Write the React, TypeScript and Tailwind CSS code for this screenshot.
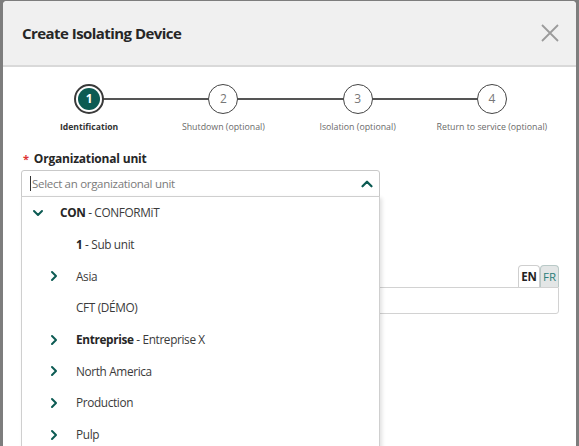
import { ChevronDown, ChevronRight, ChevronUp } from 'lucide-react';

type Unit = {
  level: number;
  icon?: 'down' | 'right';
  code?: string;
  name: string;
};

const units: Unit[] = [
  { level: 0, icon: 'down', code: 'CON', name: 'CONFORMiT' },
  { level: 1, code: '1', name: 'Sub unit' },
  { level: 1, icon: 'right', name: 'Asia' },
  { level: 1, name: 'CFT (DÉMO)' },
  { level: 1, icon: 'right', code: 'Entreprise', name: 'Entreprise X' },
  { level: 1, icon: 'right', name: 'North America' },
  { level: 1, icon: 'right', name: 'Production' },
  { level: 1, icon: 'right', name: 'Pulp' },
];

const steps = [
  { n: 1, label: 'Identification' },
  { n: 2, label: 'Shutdown (optional)' },
  { n: 3, label: 'Isolation (optional)' },
  { n: 4, label: 'Return to service (optional)' },
];

export default function App() {
  return (
    <div
      className="w-[579px] h-[446px] overflow-hidden bg-[#7d7d7d] pt-[1px] pl-[3px]"
      style={{ fontFamily: '"Open Sans", "Noto Sans", sans-serif' }}
    >
      <div className="w-[573px] h-[460px] bg-white rounded-t-[4px] overflow-hidden">
        {/* Header */}
        <div className="h-[66px] bg-[#f0f0f0] border-b-2 border-[#d9d9d9] flex items-center justify-between pl-[19px] pr-[17px]">
          <h1 className="text-[15px] font-bold text-[#262626] tracking-[-0.55px]">Create Isolating Device</h1>
          <svg width="18" height="18" viewBox="0 0 18 18" className="text-[#9b9b9b]">
            <path d="M1 1 L17 17 M17 1 L1 17" stroke="currentColor" strokeWidth="1.8" fill="none" />
          </svg>
        </div>

        <div className="pl-[19px] pr-[17px]">
          {/* Stepper */}
          <div className="relative grid grid-cols-4 pt-[17px]">
            <div className="absolute left-[67px] right-[67px] top-[31px] h-[2px] bg-[#555]" />
            {steps.map(s => (
              <div key={s.n} className="relative flex flex-col items-center">
                {s.n === 1 ? (
                  <div className="w-[30px] h-[30px] rounded-full border-2 border-[#3a3a3a] bg-white p-[2px]">
                    <div className="w-full h-full rounded-full bg-[#0c5b53] flex items-center justify-center text-white text-[12px] font-bold">
                      1
                    </div>
                  </div>
                ) : (
                  <div className="w-[30px] h-[30px] rounded-full border-[1.5px] border-[#444] bg-white flex items-center justify-center text-[12px] text-[#777]">
                    {s.n}
                  </div>
                )}
                <span
                  className={
                    s.n === 1
                      ? 'mt-[7px] text-[8.6px] font-bold text-[#333] whitespace-nowrap'
                      : 'mt-[7px] text-[8.8px] text-[#6a6a6a] whitespace-nowrap'
                  }
                >
                  {s.label}
                </span>
              </div>
            ))}
          </div>

          {/* Organizational unit */}
          <div className="mt-[16px] flex items-center text-[12px] font-bold text-[#262626] tracking-[-0.2px]">
            <span className="text-[#d33] mr-[5px] ml-[1px] text-[11px]">*</span>
            Organizational unit
          </div>

          <div className="relative mt-[2px] w-[359px] -ml-[1px]">
            <div className="h-[27px] border border-[#c9c9c9] rounded-t-[3px] flex items-center justify-between pl-[8px] pr-[3px]">
              <span className="text-[11.5px] text-[#7a7a7a] border-l border-[#333] pl-[1px] leading-[15px] tracking-[-0.3px]">
                Select an organizational unit
              </span>
              <ChevronUp size={18} strokeWidth={3} className="text-[#0c5b53]" />
            </div>

            {/* Dropdown menu */}
            <div className="absolute left-0 top-[26px] w-[359px] bg-white border border-[#cfcfcf] shadow-[2px_2px_4px_rgba(0,0,0,0.12)] z-10">
              {units.map((u, i) => (
                <div
                  key={i}
                  className="h-[31.7px] flex items-center text-[11.8px] text-[#3a3a3a] tracking-[-0.35px]"
                  style={{ paddingLeft: 8 + u.level * 16 }}
                >
                  <span className="w-[16px] flex items-center justify-center text-[#0c5b53]">
                    {u.icon === 'down' && <ChevronDown size={22} strokeWidth={3} />}
                    {u.icon === 'right' && <ChevronRight size={20} strokeWidth={3} />}
                  </span>
                  <span className="ml-[14px]">
                    {u.code && <b className="font-bold text-[#262626]">{u.code}</b>}
                    {u.code ? ` - ${u.name}` : u.name}
                  </span>
                </div>
              ))}
            </div>
          </div>

          {/* Name field (partly covered) */}
          <div className="mt-[68px] flex flex-col items-end">
            <div className="flex">
              <div className="h-[22px] px-[2px] border border-b-0 border-[#cfcfcf] rounded-t-[4px] bg-white text-[11.5px] font-bold text-[#222] flex items-center">
                EN
              </div>
              <div className="h-[22px] px-[2px] border border-b-0 border-[#b9c9c7] rounded-t-[4px] bg-[#e3e6e6] text-[11.5px] text-[#2c7f7a] flex items-center">
                FR
              </div>
            </div>
            <div className="w-full h-[27px] border border-[#d2d2d2] rounded-b-[3px] rounded-tl-[3px]" />
          </div>
        </div>
      </div>
    </div>
  );
}
